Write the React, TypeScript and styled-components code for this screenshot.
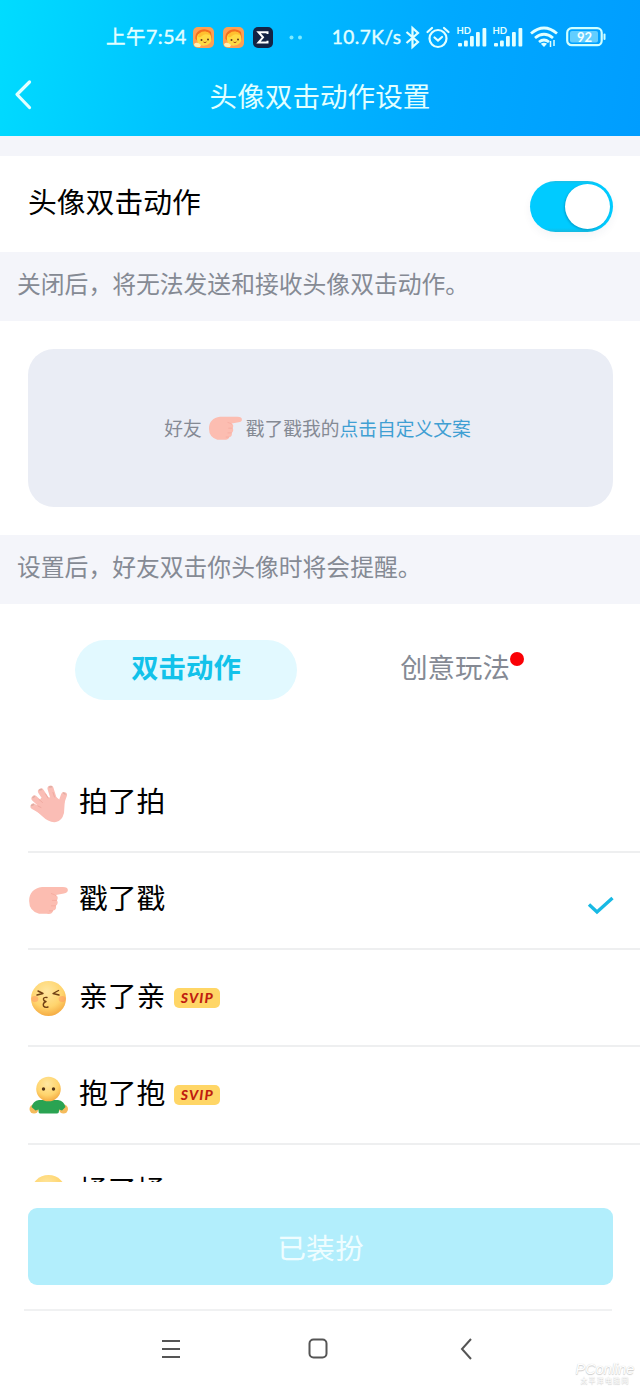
import React from "react";
import styled, { createGlobalStyle } from "styled-components";

const Global = createGlobalStyle`
  * { box-sizing: border-box; }
  body { margin: 0; background: #fff; }
  svg { display: block; flex: none; overflow: visible; }
  button { border: 0; background: none; padding: 0; font: inherit; color: inherit; }
`;

const Screen = styled.div`
  width: 640px;
  height: 1387px;
  display: flex;
  flex-direction: column;
  overflow: hidden;
  background: #fff;
  color: #000;
  font-family: "Noto Sans CJK SC", sans-serif;
  position: relative;
`;

const Header = styled.header`
  height: 136px;
  flex: none;
  background: linear-gradient(100deg, #00dcff 0%, #00c3ff 28%, #00a9ff 68%, #009dff 100%);
  color: #e2ffff;
`;

const StatusBar = styled.div`
  height: 56px;
  padding: 18px 34px 0 106px;
  display: flex;
  justify-content: space-between;
`;

const StatusGroup = styled.div<{ $gap: number }>`
  display: flex;
  align-items: center;
  height: 38px;
  gap: ${(p) => p.$gap}px;
`;

const StatusText = styled.span<{ $size: number; $end?: number }>`
  font-family: "Lato", "Noto Sans CJK SC", sans-serif;
  font-size: ${(p) => p.$size}px;
  margin-right: ${(p) => p.$end ?? 0}px;
  font-weight: 400;
  line-height: 38px;
  letter-spacing: 0.5px;
  white-space: nowrap;
  -webkit-text-stroke: 0.4px currentColor;
`;

const TitleBar = styled.div`
  height: 78px;
  display: grid;
  grid-template-columns: 60px 1fr 60px;
  align-items: center;
`;

const BackButton = styled.button`
  padding-left: 14px;
`;

const Title = styled.h1`
  margin: 0;
  text-align: center;
  font-size: 27.6px;
  line-height: 40px;
  font-weight: 400;
`;

const Spacer = styled.div`
  height: 20px;
  flex: none;
  background: #f4f5fa;
`;

const SettingRow = styled.section`
  height: 96px;
  flex: none;
  padding: 0 27px 0 28px;
  display: flex;
  justify-content: space-between;
  align-items: center;
`;

const SettingLabel = styled.span`
  font-size: 28.8px;
  line-height: 40px;
  margin-bottom: 7px;
`;

const Switch = styled.button`
  width: 83px;
  height: 51px;
  border-radius: 26px;
  margin-top: 5px;
  padding: 3px;
  background: linear-gradient(180deg, #1bbfe6 0, #00cbff 3px, #00cbff 47px, #17b9df 51px);
  display: flex;
  justify-content: flex-end;
  box-shadow: 0 4px 8px rgba(40, 60, 90, 0.05);
`;

const Knob = styled.span`
  width: 45px;
  height: 45px;
  border-radius: 50%;
  background: #fff;
  box-shadow: -1px 1px 2px rgba(0, 90, 130, 0.35);
`;

const Note = styled.p`
  margin: 0;
  height: 69px;
  flex: none;
  padding: 11px 17px 0;
  background: #f4f5fa;
  color: #858a94;
  font-size: 23.8px;
  line-height: 40px;
`;

const PreviewSection = styled.section`
  height: 214px;
  flex: none;
  padding: 28px 27px 28px 28px;
`;

const PreviewCard = styled.div`
  height: 158px;
  border-radius: 26px;
  background: #eaedf5;
  color: #858a94;
  display: flex;
  align-items: center;
  justify-content: center;
  font-size: 18.75px;
  line-height: 30px;
  padding-right: 6px;

  svg { margin: 1px 4px 0 6px; }
`;

const TextLink = styled.a`
  color: #3f9fd3;
`;

const Tabs = styled.nav`
  height: 151.5px;
  flex: none;
  padding: 36px 67px 0 75px;
  display: flex;
  justify-content: space-between;
`;

const Tab = styled.button<{ $active?: boolean }>`
  width: 222px;
  height: 60px;
  border-radius: 30px;
  display: flex;
  justify-content: center;
  padding-top: 6px;
  font-size: 27.4px;
  line-height: 40px;
  font-weight: ${(p) => (p.$active ? 700 : 400)};
  color: ${(p) => (p.$active ? "#12c2ea" : "#858a94")};
  background: ${(p) => (p.$active ? "#e2f9ff" : "transparent")};
`;

const Dot = styled.i`
  width: 14px;
  height: 14px;
  margin-top: 6px;
  border-radius: 50%;
  background: #fa0005;
`;

const List = styled.ul`
  list-style: none;
  margin: 0;
  padding: 0 0 0 28px;
  height: 426.5px;
  flex: none;
  overflow: hidden;
`;

const Item = styled.li`
  height: 97.3px;
  display: flex;
  align-items: center;
  padding-right: 26px;
  border-bottom: 2px solid #eeeff0;
`;

const ItemLabel = styled.span`
  margin: 0 9px 6px 11px;
  font-size: 28.8px;
  line-height: 40px;
`;

const Badge = styled.span`
  width: 46px;
  height: 20px;
  border-radius: 5px;
  background: #ffd666;
  color: #c01d10;
  font: italic 900 14px/20px "Lato", sans-serif;
  text-align: center;
  letter-spacing: 1.2px;
`;

const CheckSlot = styled.span`
  margin: 11px 0 0 auto;
`;

const Footer = styled.footer`
  padding: 26px 28px 0 24px;
  flex: none;
`;

const ApplyButton = styled.button`
  display: block;
  width: 585px;
  height: 77px;
  margin-left: 4px;
  border-radius: 9px;
  background: #b2eefc;
  color: #effdff;
  font-size: 28.8px;
  line-height: 40px;
`;

const Divider = styled.div`
  height: 2px;
  margin-top: 24px;
  background: #f0f1f2;
`;

const SystemNav = styled.div`
  height: 75px;
  display: flex;
  align-items: center;
  padding-left: 137px;
`;

const NavButton = styled.button<{ $before?: number }>`
  margin-left: ${(p) => p.$before ?? 0}px;
`;

const Watermark = styled.div`
  position: absolute;
  right: 4px;
  bottom: 3px;
  width: 62px;
  color: #fff;
  text-align: center;
  text-shadow: 0 0 1px #ccc, 0 1px 1px #ccc;
`;

const WatermarkName = styled.div`
  font: italic 400 14.5px/14px "Liberation Sans", sans-serif;
`;

const WatermarkSub = styled.div`
  font-size: 7px;
  line-height: 8px;
  letter-spacing: 1.2px;
`;

const AppIcon = () => (
  <svg width="21" height="21" viewBox="0 0 21 21">
    <rect width="21" height="21" rx="5" fill="#ffa052" />
    <path d="M2.500 12C1 3 12-1 18 5L19 12Q15 19 8 17Z" fill="#f3701f" />
    <path d="M4 13Q3 6 9 6Q13 3 17 7Q20 12 17 16Q13 20 7 18Q4 16 4 13Z" fill="#ffda45" />
    <path d="M5 10Q6 4 12 4.500Q17 5 17 8Q11 6 9 9Q7 11 5 10Z" fill="#ffc02f" />
    <circle cx="8.500" cy="13" r="1" fill="#683516" />
    <circle cx="15" cy="12.500" r="1" fill="#683516" />
    <path d="M10.500 15Q12 16.500 13.500 14.800" fill="none" stroke="#aa4c16" />
    <path d="M1 17Q4 14 8 18L7 20H4Q1 20 1 17Z" fill="#fff0b2" />
  </svg>
);

const SigmaIcon = () => (
  <svg width="20" height="21" viewBox="0 0 20 21">
    <rect width="20" height="21" rx="5" fill="#142344" />
    <path d="M14.500 7V5.200H5.500L10 10.300L5.500 15.500H14.500V13.700" fill="none" stroke="#fff" strokeWidth="2" />
  </svg>
);

const MoreDots = () => (
  <svg width="18" height="5" viewBox="0 0 18 5" fill="#7deaff">
    <circle cx="9.500" cy="2.500" r="2" />
    <circle cx="18" cy="2.500" r="2" />
  </svg>
);

const Bluetooth = () => (
  <svg width="15" height="23" viewBox="0 0 15 23" fill="none" stroke="currentColor" strokeWidth="2.200">
    <path d="M1.500 6L13 16L7.500 21V2L13 7L1.500 17" />
  </svg>
);

const Alarm = () => (
  <svg width="24" height="23" viewBox="0 0 24 23" fill="none" stroke="currentColor" strokeWidth="2.200" strokeLinecap="round">
    <circle cx="12" cy="12.500" r="8.500" />
    <path d="M1.500 6L6 2M22.500 6L18 2M8.500 11.500L12 14.500L16 11" />
  </svg>
);

const Signal = () => (
  <svg width="30" height="22" viewBox="0 0 30 22" fill="currentColor">
    <text x="-0.500" y="8" fontSize="9.500" fontWeight="700" fontFamily="Lato, sans-serif">HD</text>
    <rect x="1" y="17" width="4" height="3.500" rx="1" />
    <rect x="7" y="14.500" width="3.800" height="6" rx="1" />
    <rect x="13" y="10" width="3.800" height="10.500" rx="1" />
    <rect x="19" y="6" width="3.800" height="14.500" rx="1" />
    <rect x="25.500" y="2" width="3.800" height="18.500" rx="1" />
  </svg>
);

const Wifi = () => (
  <svg width="28" height="22" viewBox="0 0 28 22" fill="none" stroke="currentColor" strokeWidth="2.800">
    <path d="M1 7.500Q14-3.500 27 7.500M5 12Q14 4.500 23 12M9 16Q14 12 19 16" />
    <path d="M14 21L10.800 17.800Q14 15.500 17 17.800Z" fill="currentColor" stroke="none" />
    <path d="M20.500 15V21M24 14V20" strokeWidth="1.500" />
  </svg>
);

const Battery = () => (
  <svg width="42" height="20" viewBox="-2 0 42 20">
    <rect x="1.200" y="1.200" width="34.500" height="17" rx="4.500" fill="none" stroke="#d0ffff" strokeWidth="2.200" />
    <rect x="4" y="4" width="28" height="11.500" rx="2" fill="#62ceff" />
    <path d="M38.500 7.500V12" stroke="#d0ffff" strokeWidth="2" strokeLinecap="round" />
    <text x="18.500" y="14.500" textAnchor="middle" fontSize="13" fontWeight="700" fill="#f4ffff" fontFamily="Lato, sans-serif">92</text>
  </svg>
);

const BackArrow = () => (
  <svg width="19" height="30" viewBox="0 0 19 30" fill="none" stroke="currentColor" strokeWidth="3.200" strokeLinecap="round" strokeLinejoin="round">
    <path d="M15.500 2L3 14.500L15.500 27.500" />
  </svg>
);

const PointHand = ({ width = 40 }: { width?: number }) => (
  <svg width={width} height={width * 0.72} viewBox="0 0 40 29">
    <path d="M1 15C1 7 6 2 14 1H35Q40 1 40 4Q40 7 36 7.500L28 9Q31 11 29 14.500Q31 17 28 20Q29 24 25 25Q24 29 19 28H11Q1 25 1 15Z" fill="#fcbdb1" />
    <path d="M23 7.500Q27 8.500 28 10M24 14.500H29M23 20H28M21 25H25" fill="none" stroke="#f6aca0" strokeWidth="1" />
  </svg>
);

const WaveHand = () => (
  <svg width="40" height="40" viewBox="0 0 40 40">
    <g fill="none" stroke="#fabdb5" strokeWidth="6" strokeLinecap="round">
      <path d="M17 30L5.500 23.500M18 26L6.500 15.500M22 22L13 8.500M27 20L22.500 5.500M31 26L36 12" />
    </g>
    <path d="M9 22L13 15L19 15L27 13L33 18L37 15L36 30Q34 38 28 39Q21 40 14 33L6 26Z" fill="#fabdb5" />
    <path d="M11 16.500L14.500 19.500M17.500 11L20 15M25 9.500L26.500 14M10 23L13 24.500" stroke="#f0aaa1" strokeWidth="1" strokeLinecap="round" />
    <path d="M3.500 22.500L5.500 21.500M5 14.500L6.500 13.500M11.500 7L13.500 6.500M21.500 4L23.500 3.800M35.500 10L37 11" stroke="#dfaea4" strokeWidth="1.500" strokeLinecap="round" />
  </svg>
);

const FaceGradient = ({ id }: { id: string }) => (
  <defs>
    <radialGradient id={id} cx="45%" cy="30%" r="75%">
      <stop offset="0" stopColor="#ffe7a0" />
      <stop offset=".6" stopColor="#ffd46d" />
      <stop offset="1" stopColor="#f3a43b" />
    </radialGradient>
  </defs>
);

const KissFace = () => (
  <svg width="40" height="40" viewBox="0 0 40 40">
    <FaceGradient id="kiss" />
    <circle cx="20.500" cy="20.500" r="17.500" fill="url(#kiss)" />
    <ellipse cx="6.800" cy="21" rx="3.500" ry="3" fill="#ff9363" opacity=".5" />
    <ellipse cx="34.200" cy="21" rx="3.500" ry="3" fill="#ff9363" opacity=".5" />
    <path d="M10 13L15 15.500L9 17M30.500 12.500L25 15.500L31 17M19 19.500Q15 19 15.500 21.500Q16 23.500 18 23.500Q14.500 25 15.500 28Q17 30 20 29" fill="none" stroke="#704014" strokeWidth="1.400" strokeLinecap="round" strokeLinejoin="round" />
  </svg>
);

const HugFigure = () => (
  <svg width="40" height="40" viewBox="0 0 40 40">
    <FaceGradient id="hug" />
    <circle cx="6" cy="34" r="4.500" fill="#f5bb5c" />
    <circle cx="35.500" cy="34" r="4.500" fill="#f5bb5c" />
    <path d="M11 25H30Q36 26 37.500 32L34 35.500L31 34.500V36Q31 38.500 29 38.500H12Q10.500 38.500 10.500 36V34.500L7.500 35.500L3.500 32Q5 26 11 25Z" fill="#2aa352" />
    <circle cx="20.500" cy="14" r="12.300" fill="url(#hug)" />
    <circle cx="15.500" cy="14" r="1.700" fill="#553619" />
    <circle cx="25.500" cy="14" r="1.700" fill="#553619" />
  </svg>
);

const PlainFace = () => (
  <svg width="40" height="40" viewBox="0 0 40 40">
    <FaceGradient id="plain" />
    <circle cx="20.500" cy="20.500" r="17.500" fill="url(#plain)" />
  </svg>
);

const Check = () => (
  <svg width="27" height="20" viewBox="0 0 27 20" fill="none" stroke="#18b9e4" strokeWidth="3.400">
    <path d="M2 8.500L10 16L25.500 2" />
  </svg>
);

const actions = [
  { label: "拍了拍", icon: <WaveHand /> },
  { label: "戳了戳", icon: <PointHand />, selected: true },
  { label: "亲了亲", icon: <KissFace />, svip: true },
  { label: "抱了抱", icon: <HugFigure />, svip: true },
  { label: "揉了揉", icon: <PlainFace /> },
];

export default function App() {
  return (
    <Screen>
      <Global />
      <Header>
        <StatusBar>
          <StatusGroup $gap={9}>
            <StatusText $size={19.5} $end={-3}>上午7:54</StatusText>
            <AppIcon />
            <AppIcon />
            <SigmaIcon />
            <MoreDots />
          </StatusGroup>
          <StatusGroup $gap={6.5}>
            <StatusText $size={19} $end={-3.5}>10.7K/s</StatusText>
            <Bluetooth />
            <Alarm />
            <Signal />
            <Signal />
            <Wifi />
            <Battery />
          </StatusGroup>
        </StatusBar>
        <TitleBar>
          <BackButton aria-label="返回"><BackArrow /></BackButton>
          <Title>头像双击动作设置</Title>
        </TitleBar>
      </Header>
      <Spacer />
      <SettingRow>
        <SettingLabel>头像双击动作</SettingLabel>
        <Switch role="switch" aria-checked="true"><Knob /></Switch>
      </SettingRow>
      <Note>关闭后，将无法发送和接收头像双击动作。</Note>
      <PreviewSection>
        <PreviewCard>
          <span>好友</span>
          <PointHand width={34} />
          <span>戳了戳我的</span>
          <TextLink>点击自定义文案</TextLink>
        </PreviewCard>
      </PreviewSection>
      <Note>设置后，好友双击你头像时将会提醒。</Note>
      <Tabs>
        <Tab $active>双击动作</Tab>
        <Tab>创意玩法<Dot /></Tab>
      </Tabs>
      <List>
        {actions.map((a) => (
          <Item key={a.label}>
            {a.icon}
            <ItemLabel>{a.label}</ItemLabel>
            {a.svip && <Badge>SVIP</Badge>}
            {a.selected && <CheckSlot><Check /></CheckSlot>}
          </Item>
        ))}
      </List>
      <Footer>
        <ApplyButton>已装扮</ApplyButton>
        <Divider />
        <SystemNav>
          <NavButton aria-label="菜单">
            <svg width="20" height="20" viewBox="0 0 20 20" stroke="#555" strokeWidth="2">
              <path d="M1 2H19M1 10H19M1 18H19" />
            </svg>
          </NavButton>
          <NavButton aria-label="主页" $before={127}>
            <svg width="20" height="21" viewBox="0 0 20 21" fill="none" stroke="#555" strokeWidth="2">
              <rect x="1.500" y="1.500" width="17" height="18" rx="4" />
            </svg>
          </NavButton>
          <NavButton aria-label="后退" $before={131}>
            <svg width="14" height="22" viewBox="0 0 14 22" fill="none" stroke="#555" strokeWidth="2">
              <path d="M12 1L3 11L12 21" />
            </svg>
          </NavButton>
        </SystemNav>
      </Footer>
      <Watermark>
        <WatermarkName>PConline</WatermarkName>
        <WatermarkSub>太平洋电脑网</WatermarkSub>
      </Watermark>
    </Screen>
  );
}
